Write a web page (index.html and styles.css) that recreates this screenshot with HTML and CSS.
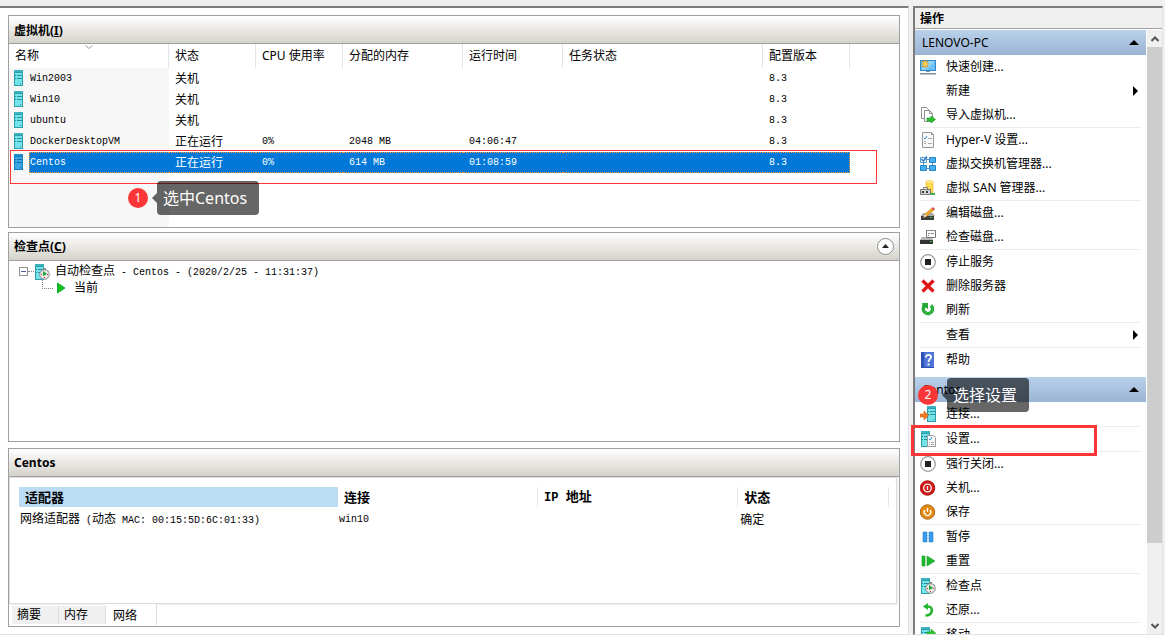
FILE: index.html
```html
<!DOCTYPE html>
<html lang="zh-CN">
<head>
<meta charset="utf-8">
<title>Hyper-V 管理器</title>
<link rel="stylesheet" href="styles.css">
</head>
<body>
<svg class="defs" aria-hidden="true">
  <defs>
    <symbol id="server" viewBox="0 0 9 16">
      <path fill="#2c9dA9" d="M0 0h9v16H0z"/><path fill="#3ab3bf" d="M0 0h9v2H0z"/><path fill="#74e4ea" d="M1 3h7v12H1z"/><path fill="#2a8f9c" d="M1 5h1v1H1zM3 5h5v1H3zM1 8h1v1H1zM3 8h5v1H3zM6 13h1v1H6z"/>
    </symbol>
    <symbol id="server-sel" viewBox="0 0 9 16">
      <path fill="#167fc2" d="M0 0h9v16H0z"/><path fill="#1c8ccb" d="M0 0h9v2H0z"/><path fill="#3aa9e0" d="M1 3h7v12H1z"/><path fill="#1268aa" d="M1 5h1v1H1zM3 5h5v1H3zM1 8h1v1H1zM3 8h5v1H3zM6 13h1v1H6z"/>
    </symbol>
    <symbol id="checkpoint" viewBox="0 0 16 16">
      <path fill="#2c9da9" d="M1 0h9v16H1z"/><path fill="#3ab3bf" d="M1 0h9v2H1z"/><path fill="#74e4ea" d="M2 3h7v12H2z"/><path fill="#2a8f9c" d="M2 5h1v1H2zM4 5h5v1H4zM2 8h1v1H2zM4 8h3v1H4z"/>
      <path fill="#888" d="M9 4h3v2H9zM13 6l2 1-1 1z"/><circle cx="10.500" cy="10.500" r="4.800" fill="#e8e8e8" stroke="#8a8a8a"/><path fill="#d33" d="M13 10h1v1h-1zM10 13h1v1h-1zM7 10h1v1H7z"/><path fill="#19a53a" d="M9 7l4 3-4 2z"/>
    </symbol>
    <symbol id="play" viewBox="0 0 9 12"><path fill="#12c012" stroke="#18a83c" d="M.5 1v10l7.500-5z"/></symbol>
    <symbol id="create" viewBox="0 0 16 16">
      <path fill="#2c87c9" d="M0 1h16v11H0z"/><path fill="#6cc2f4" d="M1 2h14v9H1z"/><path fill="#8fd3fa" d="M8 2h7L6 11H1z"/><path fill="#7e92a0" d="M6 12h4v1H6zM0 14h16v1H0z"/><path fill="#b9c6cf" d="M0 15h16v1H0z"/>
      <path stroke="#f59a12" stroke-width="1.200" d="M5 1v8M1 5h8M2 2l6 6M8 2L2 8"/><circle cx="5" cy="5" r="2" fill="#ffd65c"/>
    </symbol>
    <symbol id="import" viewBox="0 0 16 16">
      <path fill="#fff" stroke="#8e8e8e" d="M1.500 11.500V.5h5l2 2v9z"/><path fill="#fff" stroke="#8e8e8e" d="M4.500 14.500v-11h5l3 3v8z"/><path fill="none" stroke="#8e8e8e" d="M9.500 3.500v3h3"/><path fill="#2fc52f" stroke="#159a24" stroke-width=".7" d="M7 11h4V9l4.500 3.500L11 16v-2H7z"/>
    </symbol>
    <symbol id="settings" viewBox="0 0 16 16">
      <path fill="#f7f7f7" stroke="#969696" d="M2.500 .5h9l2 2v13h-11z"/><path fill="none" stroke="#969696" d="M11.500 .5v2h2"/><path fill="none" stroke="#3690dc" d="M4 6l1 1 2-3"/><path stroke="#a9a9a9" d="M8 6.500h4M8 11.500h4M4 11.500h2M4 9.500h2"/>
    </symbol>
    <symbol id="switch" viewBox="0 0 16 16">
      <path fill="none" stroke="#7994a5" d="M3.500 6v3M12.500 6v3M7 12.500h2M7 3.500h2"/>
      <path fill="#eef7fd" stroke="#5b9ac6" d="M.5 1.500h6v5h-6z"/><path fill="none" stroke="#1e79c8" stroke-width="1.400" d="M1.500 3l2 2L7 .5"/>
      <path fill="#45b0ef" stroke="#2784c4" d="M9.500 1.500h6v5h-6zM.5 9.500h6v5h-6zM9.500 9.500h6v5h-6z"/>
    </symbol>
    <symbol id="san" viewBox="0 0 16 16">
      <path fill="#ffd94e" stroke="#e2ab21" stroke-width=".6" d="M6 1.500c0-1.500 7-1.500 7 0v11H6z"/><ellipse cx="9.500" cy="1.500" rx="3.500" ry="1.200" fill="#ffeb91"/>
      <path fill="#d6d6d6" stroke="#777" d="M.5 9.500h10v5H.5z"/><path fill="#3a3a3a" d="M2 11h2v2H2zM6 11h2v2H6z"/><path fill="#8b8b8b" d="M3 7h5v2H7V8H4v1H3z"/><path fill="#39b54a" d="M11 13h4v2h-4z"/>
    </symbol>
    <symbol id="editdisk" viewBox="0 0 16 16">
      <path fill="#aaa" d="M3 8h10l2 3H1z"/><path fill="#3d3d3d" d="M1 11h13v4H1z"/><path fill="#35d13e" d="M10 12h2v1h-2z"/><path fill="#f5a828" stroke="#b97817" stroke-width=".5" d="M4 12l1-3 7-6 2 2-7 6z"/><path fill="#d94f4f" d="M11.500 3.500L13 2l2 2-1.500 1.500z"/><path fill="#f6d9ae" d="M3 13l2-4 2 2z"/>
    </symbol>
    <symbol id="checkdisk" viewBox="0 0 16 16">
      <path fill="#b5b5b5" d="M2 8h10l1 3H0z"/><path fill="#333" d="M0 11h13v4H0z"/><path fill="#35d13e" d="M10 12h2v1h-2z"/><path fill="#fff" stroke="#777" d="M6.500 1.500h9v7h-9z"/><path fill="#888" d="M6 1h10v1H6zM8 4h2v1H8zM11 4h3v1h-3zM8 6h1v1H8z"/>
    </symbol>
    <symbol id="stop" viewBox="0 0 16 16"><circle cx="8" cy="8" r="7.300" fill="#fff" stroke="#999" stroke-width="1.200"/><path fill="#222" d="M5 5h6v6H5z"/></symbol>
    <symbol id="delete" viewBox="0 0 16 16"><path fill="none" stroke="#e01515" stroke-width="3.200" d="M2.500 2.500l11 11M13.500 2.500l-11 11"/></symbol>
    <symbol id="refresh" viewBox="0 0 16 16"><path fill="none" stroke="#1c8f2c" stroke-width="3.400" d="M11 3.500a4.600 4.600 0 1 1-7 1"/><path fill="none" stroke="#2fb940" stroke-width="2.400" d="M11 3.500a4.600 4.600 0 1 1-7 1"/><path fill="#25a936" d="M2 1h6v6L5.500 5.500 3 8z"/></symbol>
    <symbol id="help" viewBox="0 0 16 16"><path fill="#2f50b5" d="M1 0h13v16H1z"/><path fill="#4f76d6" d="M4 0h10v15H4z"/><path fill="none" stroke="#fff" stroke-width="1.800" d="M6 5.500C6 2 11 2 11 5c0 2-2.500 2-2.500 5"/><path fill="#fff" d="M7.500 11.500h2v2h-2z"/></symbol>
    <symbol id="connect" viewBox="0 0 16 16"><use href="#server" x="7" y="0" width="9" height="16"/><path fill="#f27b21" stroke="#cf5b10" stroke-width=".6" d="M0 8h4V5l4.500 4.500L4 14v-3H0z"/></symbol>
    <symbol id="vmsettings" viewBox="0 0 16 16"><use href="#server" x="1" y="0" width="9" height="16"/><path fill="#f8f8f8" stroke="#999" d="M7.500 4.500h6l2 2v9h-8z"/><path fill="none" stroke="#3690dc" d="M9 8l1 1 2-3"/><path stroke="#aaa" d="M9 11.500h1M11 11.500h3M9 13.500h1M11 13.500h3"/></symbol>
    <symbol id="shutdown" viewBox="0 0 16 16"><circle cx="7.500" cy="8" r="7.300" fill="#d01616" stroke="#9f0b0b" stroke-width=".8"/><circle cx="7.500" cy="8" r="3.800" fill="none" stroke="#fff" stroke-width="1.300"/><path stroke="#fff" stroke-width="1.300" d="M7.500 6v4"/></symbol>
    <symbol id="save" viewBox="0 0 16 16"><circle cx="7.500" cy="8" r="7.200" fill="#e38a14" stroke="#a9650e"/><path fill="none" stroke="#fff" stroke-width="1.300" d="M5 6a3.300 3.300 0 1 0 5 0M7.500 4v4"/></symbol>
    <symbol id="pause" viewBox="0 0 16 16"><path fill="#3b9bea" stroke="#2a82cf" stroke-width=".6" d="M3 3h4v10H3zM9 3h4v10H9z"/></symbol>
    <symbol id="reset" viewBox="0 0 16 16"><path fill="#1fb92e" stroke="#159a26" stroke-width=".6" d="M2 3h3v10H2zM7 3v10l8-5z"/></symbol>
    <symbol id="revert" viewBox="0 0 16 16"><path fill="none" stroke="#25b52f" stroke-width="2.600" d="M5 4.500h3c6 0 5 9-2.500 9"/><path fill="#25b52f" d="M3 4.500L8 1v7z"/></symbol>
    <symbol id="move" viewBox="0 0 16 16"><use href="#server" x="1" y="0" width="9" height="16"/><path fill="#2fc52f" stroke="#159a24" stroke-width=".6" d="M7 5h4V2l5 4.500-5 4.500V8H7z"/></symbol>
  </defs>
</svg>

<div class="app">
  <main class="center-pane">
    <section class="panel panel-vms">
      <header class="panel-head"><h2>虚拟机(<u>I</u>)</h2></header>
      <div class="vm-list">
        <table class="vm-table">
          <colgroup><col class="c-name"><col class="c-small"><col class="c-small"><col class="c-mem"><col class="c-time"><col class="c-task"><col class="c-small"></colgroup>
          <thead><tr>
            <th class="sorted">名称<svg class="sort" viewBox="0 0 8 4"><path fill="none" stroke="#999" d="M.5.5L4 3.500 7.500.5"/></svg></th>
            <th>状态</th><th>CPU 使用率</th><th>分配的内存</th><th>运行时间</th><th>任务状态</th><th>配置版本</th>
          </tr></thead>
          <tbody>
            <tr><td><span class="vm"><svg><use href="#server"/></svg><span class="vm-name mono">Win2003</span></span></td><td>关机</td><td></td><td></td><td></td><td></td><td class="mono">8.3</td></tr>
            <tr><td><span class="vm"><svg><use href="#server"/></svg><span class="vm-name mono">Win10</span></span></td><td>关机</td><td></td><td></td><td></td><td></td><td class="mono">8.3</td></tr>
            <tr><td><span class="vm"><svg><use href="#server"/></svg><span class="vm-name mono">ubuntu</span></span></td><td>关机</td><td></td><td></td><td></td><td></td><td class="mono">8.3</td></tr>
            <tr><td><span class="vm"><svg><use href="#server"/></svg><span class="vm-name mono">DockerDesktopVM</span></span></td><td>正在运行</td><td class="mono">0%</td><td class="mono">2048 MB</td><td class="mono">04:06:47</td><td></td><td class="mono">8.3</td></tr>
            <tr class="selected"><td><span class="vm"><svg><use href="#server-sel"/></svg><span class="vm-name mono">Centos</span></span></td><td>正在运行</td><td class="mono">0%</td><td class="mono">614 MB</td><td class="mono">01:08:59</td><td></td><td class="mono">8.3</td></tr>
          </tbody>
        </table>
      </div>
      <div class="mark mark-row"></div>
      <div class="step step-one"><span class="badge">1</span><span class="tip">选中Centos</span></div>
    </section>

    <section class="panel panel-points">
      <header class="panel-head"><h2>检查点(<u>C</u>)</h2>
        <button class="collapse" aria-label="折叠"><svg viewBox="0 0 7 4"><path fill="#222" d="M3.500 0L7 4H0z"/></svg></button>
      </header>
      <ul class="tree">
        <li class="tree-row"><button class="minus" aria-label="收起"></button><span class="dots"></span><svg class="icon"><use href="#checkpoint"/></svg><span class="tree-text">自动检查点<span class="mono"> - Centos - (2020/2/25 - 11:31:37)</span></span></li>
        <li class="tree-row child"><span class="elbow"></span><svg class="play"><use href="#play"/></svg><span>当前</span></li>
      </ul>
    </section>

    <section class="panel panel-detail">
      <header class="panel-head"><h2>Centos</h2></header>
      <div class="tab-page">
        <table class="net-table">
          <colgroup><col class="n-adapter"><col class="n-conn"><col class="n-conn"><col class="n-state"></colgroup>
          <thead><tr><th class="active">适配器</th><th>连接</th><th><span class="mono-bold">IP </span>地址</th><th>状态</th></tr></thead>
          <tbody><tr><td>网络适配器<span class="mono"> (</span>动态<span class="mono"> MAC: 00:15:5D:6C:01:33)</span></td><td class="mono">win10</td><td></td><td>确定</td></tr></tbody>
        </table>
      </div>
      <div class="tabs" role="tablist">
        <button role="tab">摘要</button><button role="tab">内存</button><button role="tab" class="current" aria-selected="true">网络</button>
      </div>
    </section>
  </main>

  <aside class="actions">
    <h2 class="actions-title">操作</h2>
    <div class="actions-body">
      <div class="actions-list">
        <h3 class="group">LENOVO-PC<svg viewBox="0 0 10 5"><path d="M5 0l5 5H0z"/></svg></h3>
        <ul>
          <li><button><svg class="icon"><use href="#create"/></svg>快速创建...</button></li>
          <li><button class="sub"><span class="icon"></span>新建<svg class="more" viewBox="0 0 5 10"><path d="M0 0l5 5-5 5z"/></svg></button></li>
          <li><button><svg class="icon"><use href="#import"/></svg>导入虚拟机...</button></li>
        </ul>
        <ul>
          <li><button><svg class="icon"><use href="#settings"/></svg>Hyper-V 设置...</button></li>
          <li><button><svg class="icon"><use href="#switch"/></svg>虚拟交换机管理器...</button></li>
          <li><button><svg class="icon"><use href="#san"/></svg>虚拟 SAN 管理器...</button></li>
        </ul>
        <ul>
          <li><button><svg class="icon"><use href="#editdisk"/></svg>编辑磁盘...</button></li>
          <li><button><svg class="icon"><use href="#checkdisk"/></svg>检查磁盘...</button></li>
        </ul>
        <ul>
          <li><button><svg class="icon"><use href="#stop"/></svg>停止服务</button></li>
          <li><button><svg class="icon"><use href="#delete"/></svg>删除服务器</button></li>
          <li><button><svg class="icon"><use href="#refresh"/></svg>刷新</button></li>
        </ul>
        <ul><li><button class="sub"><span class="icon"></span>查看<svg class="more" viewBox="0 0 5 10"><path d="M0 0l5 5-5 5z"/></svg></button></li></ul>
        <ul class="last"><li><button><svg class="icon"><use href="#help"/></svg>帮助</button></li></ul>
        <h3 class="group group-vm">Centos<svg viewBox="0 0 10 5"><path d="M5 0l5 5H0z"/></svg></h3>
        <ul><li><button><svg class="icon"><use href="#connect"/></svg>连接...</button></li></ul>
        <ul><li><button><svg class="icon"><use href="#vmsettings"/></svg>设置...</button></li></ul>
        <ul>
          <li><button><svg class="icon"><use href="#stop"/></svg>强行关闭...</button></li>
          <li><button><svg class="icon"><use href="#shutdown"/></svg>关机...</button></li>
          <li><button><svg class="icon"><use href="#save"/></svg>保存</button></li>
        </ul>
        <ul>
          <li><button><svg class="icon"><use href="#pause"/></svg>暂停</button></li>
          <li><button><svg class="icon"><use href="#reset"/></svg>重置</button></li>
        </ul>
        <ul>
          <li><button><svg class="icon"><use href="#checkpoint"/></svg>检查点</button></li>
          <li><button><svg class="icon"><use href="#revert"/></svg>还原...</button></li>
        </ul>
        <ul class="last"><li><button><svg class="icon"><use href="#move"/></svg>移动...</button></li></ul>
      </div>
      <div class="scrollbar">
        <button aria-label="向上"><svg viewBox="0 0 8 6"><path d="M.5 5L4 1.500 7.500 5"/></svg></button>
        <div class="track"><div class="thumb"></div></div>
        <button aria-label="向下"><svg viewBox="0 0 8 6"><path d="M.5 1L4 4.500 7.500 1"/></svg></button>
      </div>
    </div>
    <div class="mark mark-item"></div>
    <div class="step step-two"><span class="badge">2</span><span class="tip">选择设置</span></div>
  </aside>
</div>
</body>
</html>
```
FILE: styles.css
```css
* { box-sizing: border-box; }

body {
  margin: 0;
  background: #f0f0f0;
  color: #000;
  font: 12px/16px "Noto Sans", "Noto Sans CJK SC", sans-serif;
}

h2, h3, ul { margin: 0; padding: 0; font-size: 12px; list-style: none; }
button { border: 0; padding: 0; background: none; color: inherit; font: inherit; }
.defs { position: absolute; width: 0; height: 0; }

.mono { font-family: "Liberation Mono", monospace; font-size: 10px; white-space: pre; }
.mono-bold { font-family: "Liberation Mono", monospace; font-size: 12px; white-space: pre; }

.app {
  display: flex;
  gap: 4px;
  height: 100vh;
  padding: 6px 2px 0 0;
  overflow: hidden;
}

/* Centre column */
.center-pane {
  flex: 1;
  min-width: 0;
  display: flex;
  flex-direction: column;
  gap: 4px;
  padding: 7px 8px 7px 8px;
  background: #fff;
  border-top: 2px solid #7c7c7c;
  border-right: 1px solid #e3e3e3;
  border-bottom: 1px solid #e3e3e3;
}

.panel {
  position: relative;
  display: flex;
  flex-direction: column;
  min-height: 0;
  border: 1px solid #a0a0a0;
  background: #fff;
}
.panel-vms { flex: 213 213 0; }
.panel-points { flex: 210 210 0; }
.panel-detail { flex: 179 179 0; margin-top: 2px; }

.panel-head {
  flex: none;
  display: flex;
  align-items: center;
  justify-content: space-between;
  height: 28px;
  padding: 0 5px;
  border-bottom: 1px solid #a0a0a0;
  background: linear-gradient(#fff, #d5d2ca);
}
.panel-head h2 { line-height: 18px; padding-top: 2px; }

.collapse {
  display: flex;
  align-items: center;
  justify-content: center;
  width: 17px;
  height: 17px;
  border: 1px solid #8c8c8c;
  border-radius: 50%;
  background: #fff;
}
.collapse svg { width: 7px; height: 4px; }

/* Virtual machine list */
.vm-list {
  flex: 1;
  min-height: 0;
  background: linear-gradient(90deg, #f7f7f7 160px, #fff 160px);
}
.vm-table, .net-table { table-layout: fixed; border-spacing: 0; }
.vm-table { width: 841px; }
.c-name { width: 160px; }
.c-small { width: 87px; }
.c-mem { width: 120px; }
.c-time { width: 100px; }
.c-task { width: 200px; }

.vm-table th {
  height: 24px;
  padding: 0 6px;
  border-right: 1px solid #e5e5e5;
  background: #fff;
  font-weight: normal;
  text-align: left;
}
.sorted { position: relative; }
.sort { position: absolute; left: 76px; top: 1px; width: 8px; height: 4px; }
.vm-table td { height: 21px; padding: 0 6px; line-height: 18px; }
.vm-table td:first-child { padding: 0 0 0 5px; }
.vm { display: flex; align-items: flex-start; gap: 6px; height: 21px; }
.vm svg { flex: none; width: 9px; height: 16px; margin-top: 2px; }
.vm-name { flex: 1; height: 21px; padding: 1px; line-height: 20px; }

.selected td:not(:first-child), .selected .vm-name {
  background: #0078d7;
  color: #fff;
  border: 0 dotted #ff9a3c;
  border-width: 1px 0;
}
.selected .vm-name { border-left-width: 1px; padding: 0; }
.selected td:last-child { border-right-width: 1px; }

/* Checkpoint tree */
.tree { padding: 3px 10px; }
.tree-row { display: flex; align-items: center; height: 16px; white-space: nowrap; }
.minus {
  width: 9px;
  height: 9px;
  border: 1px solid #919191;
  background: linear-gradient(#4b63a7, #4b63a7) center / 5px 1px no-repeat #fff;
}
.dots { width: 6px; border-top: 1px dotted #808080; }
.tree .icon { margin-right: 5px; }
.child { padding-left: 23px; gap: 4px; }
.elbow {
  width: 11px;
  height: 9px;
  align-self: flex-start;
  border: 0 dotted #808080;
  border-width: 0 0 1px 1px;
}
.play { width: 9px; height: 12px; margin-right: 4px; }

/* Network details */
.tab-page {
  flex: 1;
  min-height: 0;
  margin-right: 2px;
  padding: 9px 7px 0 9px;
  border: 1px solid #dcdcdc;
  box-shadow: 1px 1px 0 #f0f0f0;
}
.net-table { width: 100%; }
.n-adapter { width: 319px; }
.n-conn { width: 23%; }
.net-table th {
  height: 20px;
  padding: 0 6px;
  border-right: 1px solid #e5e5e5;
  font-size: 13px;
  text-align: left;
}
.net-table .active { border: 0; background: #bcdcf4; }
.net-table td { height: 26px; padding: 0 1px; }
.net-table td:last-child { padding-left: 2px; }

.tabs { flex: none; display: flex; align-items: flex-start; height: 22px; padding: 0 3px; }
.tabs button {
  width: 47px;
  height: 18px;
  margin-top: 2px;
  padding: 0 5px;
  border-right: 1px solid #dcdcdc;
  background: #f0f0f0;
  text-align: left;
}
.tabs .current { width: 51px; height: 21px; margin-top: 0; padding: 2px 7px 0; background: #fff; }

/* Actions column */
.actions {
  position: relative;
  width: 250px;
  display: flex;
  flex-direction: column;
  border: 2px solid #7c7c7c;
  border-width: 2px 1px 1px 2px;
  border-right-color: #e3e3e3;
  border-bottom-color: #e3e3e3;
  background: #fff;
}
.actions-title {
  flex: none;
  height: 21px;
  padding: 3px 5px 0;
  border-bottom: 1px solid #a0a0a0;
  background: #f0f0f0;
}
.actions-body { flex: 1; min-height: 0; display: flex; gap: 1px; padding-top: 1px; }
.actions-list { flex: 1; overflow: hidden; }

.group {
  display: flex;
  align-items: center;
  justify-content: space-between;
  height: 25px;
  padding: 0 7px;
  background: linear-gradient(#b9d1ea, #9ab4d3);
  font-weight: normal;
}
.group svg { width: 10px; height: 5px; }

.actions-list ul { margin: 0 5px; border-bottom: 1px solid #ececec; }
.actions-list .last { border-bottom: 0; margin-bottom: 5px; }
.actions-list button {
  display: flex;
  align-items: center;
  width: 100%;
  height: 24px;
  white-space: nowrap;
  text-align: left;
}
.icon { flex: none; width: 16px; height: 16px; }
.actions-list .icon { margin-right: 10px; }
.more { width: 5px; height: 10px; margin: 0 3px 0 auto; }

.scrollbar { width: 15px; display: flex; flex-direction: column; background: #f0f0f0; }
.scrollbar button { height: 17px; display: flex; align-items: center; justify-content: center; }
.scrollbar svg { width: 8px; height: 6px; fill: none; stroke: #555; stroke-width: 2; }
.track { flex: 1; }
.thumb { height: 87%; background: #cdcdcd; }

/* Annotations laid over the window */
.mark { position: absolute; border: 1px solid #fb3636; pointer-events: none; }
.mark-row { left: 1px; top: 134px; width: 867px; height: 34px; }
.mark-item { left: -4px; top: 417px; width: 186px; height: 31px; border-width: 3px; }

.step { position: absolute; display: flex; align-items: center; gap: 9px; }
.step-one { left: 119px; top: 165px; }
.step-two { left: 3px; top: 370px; }
.badge {
  width: 20px;
  height: 20px;
  border-radius: 50%;
  background: #fb3636;
  color: #fff;
  line-height: 20px;
  text-align: center;
}
.tip {
  position: relative;
  height: 34px;
  padding: 0 12px 0 6px;
  border-radius: 4px;
  background: rgba(0, 0, 0, 0.6);
  color: #fff;
  font-size: 16px;
  line-height: 34px;
  white-space: nowrap;
}
.tip::before {
  content: "";
  position: absolute;
  right: 100%;
  top: 12px;
  border: 5px solid transparent;
  border-left-width: 0;
  border-right-color: rgba(0, 0, 0, 0.6);
}
```
